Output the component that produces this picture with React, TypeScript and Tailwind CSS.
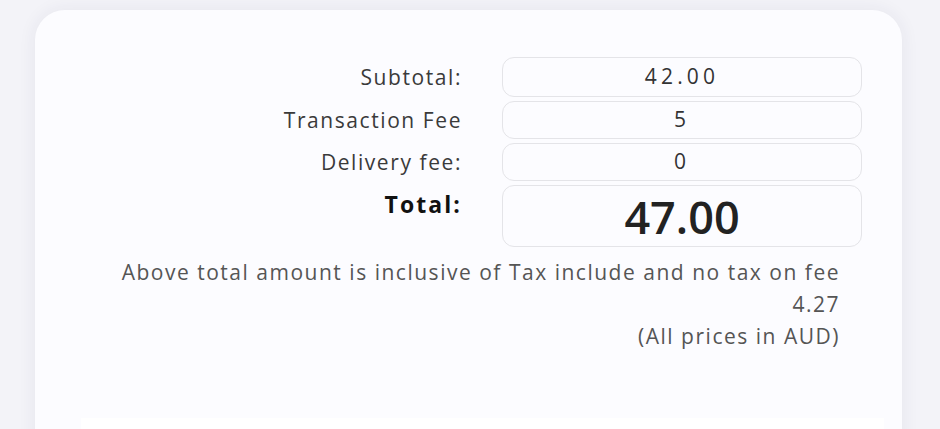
import React from "react";

const font = { fontFamily: "'Open Sans', Lato, sans-serif" };

function Row({ label, value, h }: { label: string; value: string; h: string }) {
  return (
    <div className="flex items-center justify-end gap-[42px]">
      <div className="text-[21px] tracking-[0.075em] text-[#3a3a3a] leading-none mr-[-2px]">{label}</div>
      <div className={`w-[360px] ${h} rounded-[12px] border border-[#e4e4e8] flex items-center justify-center text-[21px] tracking-[0.2em] text-[#333]`}>
        {value}
      </div>
    </div>
  );
}

export default function App() {
  return (
    <div className="w-[940px] h-[429px] overflow-hidden bg-[#f3f3f8] pt-[10px] pl-[35px]" style={font}>
      <div className="w-[867px] h-[460px] rounded-[30px] bg-[#fcfcff] shadow-[0_0_18px_rgba(40,40,90,0.07)] pt-[47px] pr-[40px] flex flex-col">
        <div className="flex flex-col gap-[4px]">
          <Row label="Subtotal:" value="42.00" h="h-[40px]" />
          <Row label="Transaction Fee" value="5" h="h-[38px]" />
          <Row label="Delivery fee:" value="0" h="h-[38px]" />
          <div className="flex items-start justify-end gap-[42px]">
            <div className="pt-[8px] text-[23px] font-bold tracking-[0.09em] text-[#111] leading-none mr-[-2px]">Total:</div>
            <div className="w-[360px] h-[62px] rounded-[12px] border border-[#e4e4e8] flex items-center justify-center text-[45px] font-semibold text-[#222] leading-none">
              47.00
            </div>
          </div>
        </div>
        <div className="mt-[9px] pr-[22px] text-right text-[21px] leading-[32px] tracking-[0.072em] text-[#555]">
          <div>Above total amount is inclusive of Tax include and no tax on fee</div>
          <div>4.27</div>
          <div>(All prices in AUD)</div>
        </div>
        <div className="mt-[66px] ml-[46px] mr-[-22px] h-[40px] bg-white" />
      </div>
    </div>
  );
}
